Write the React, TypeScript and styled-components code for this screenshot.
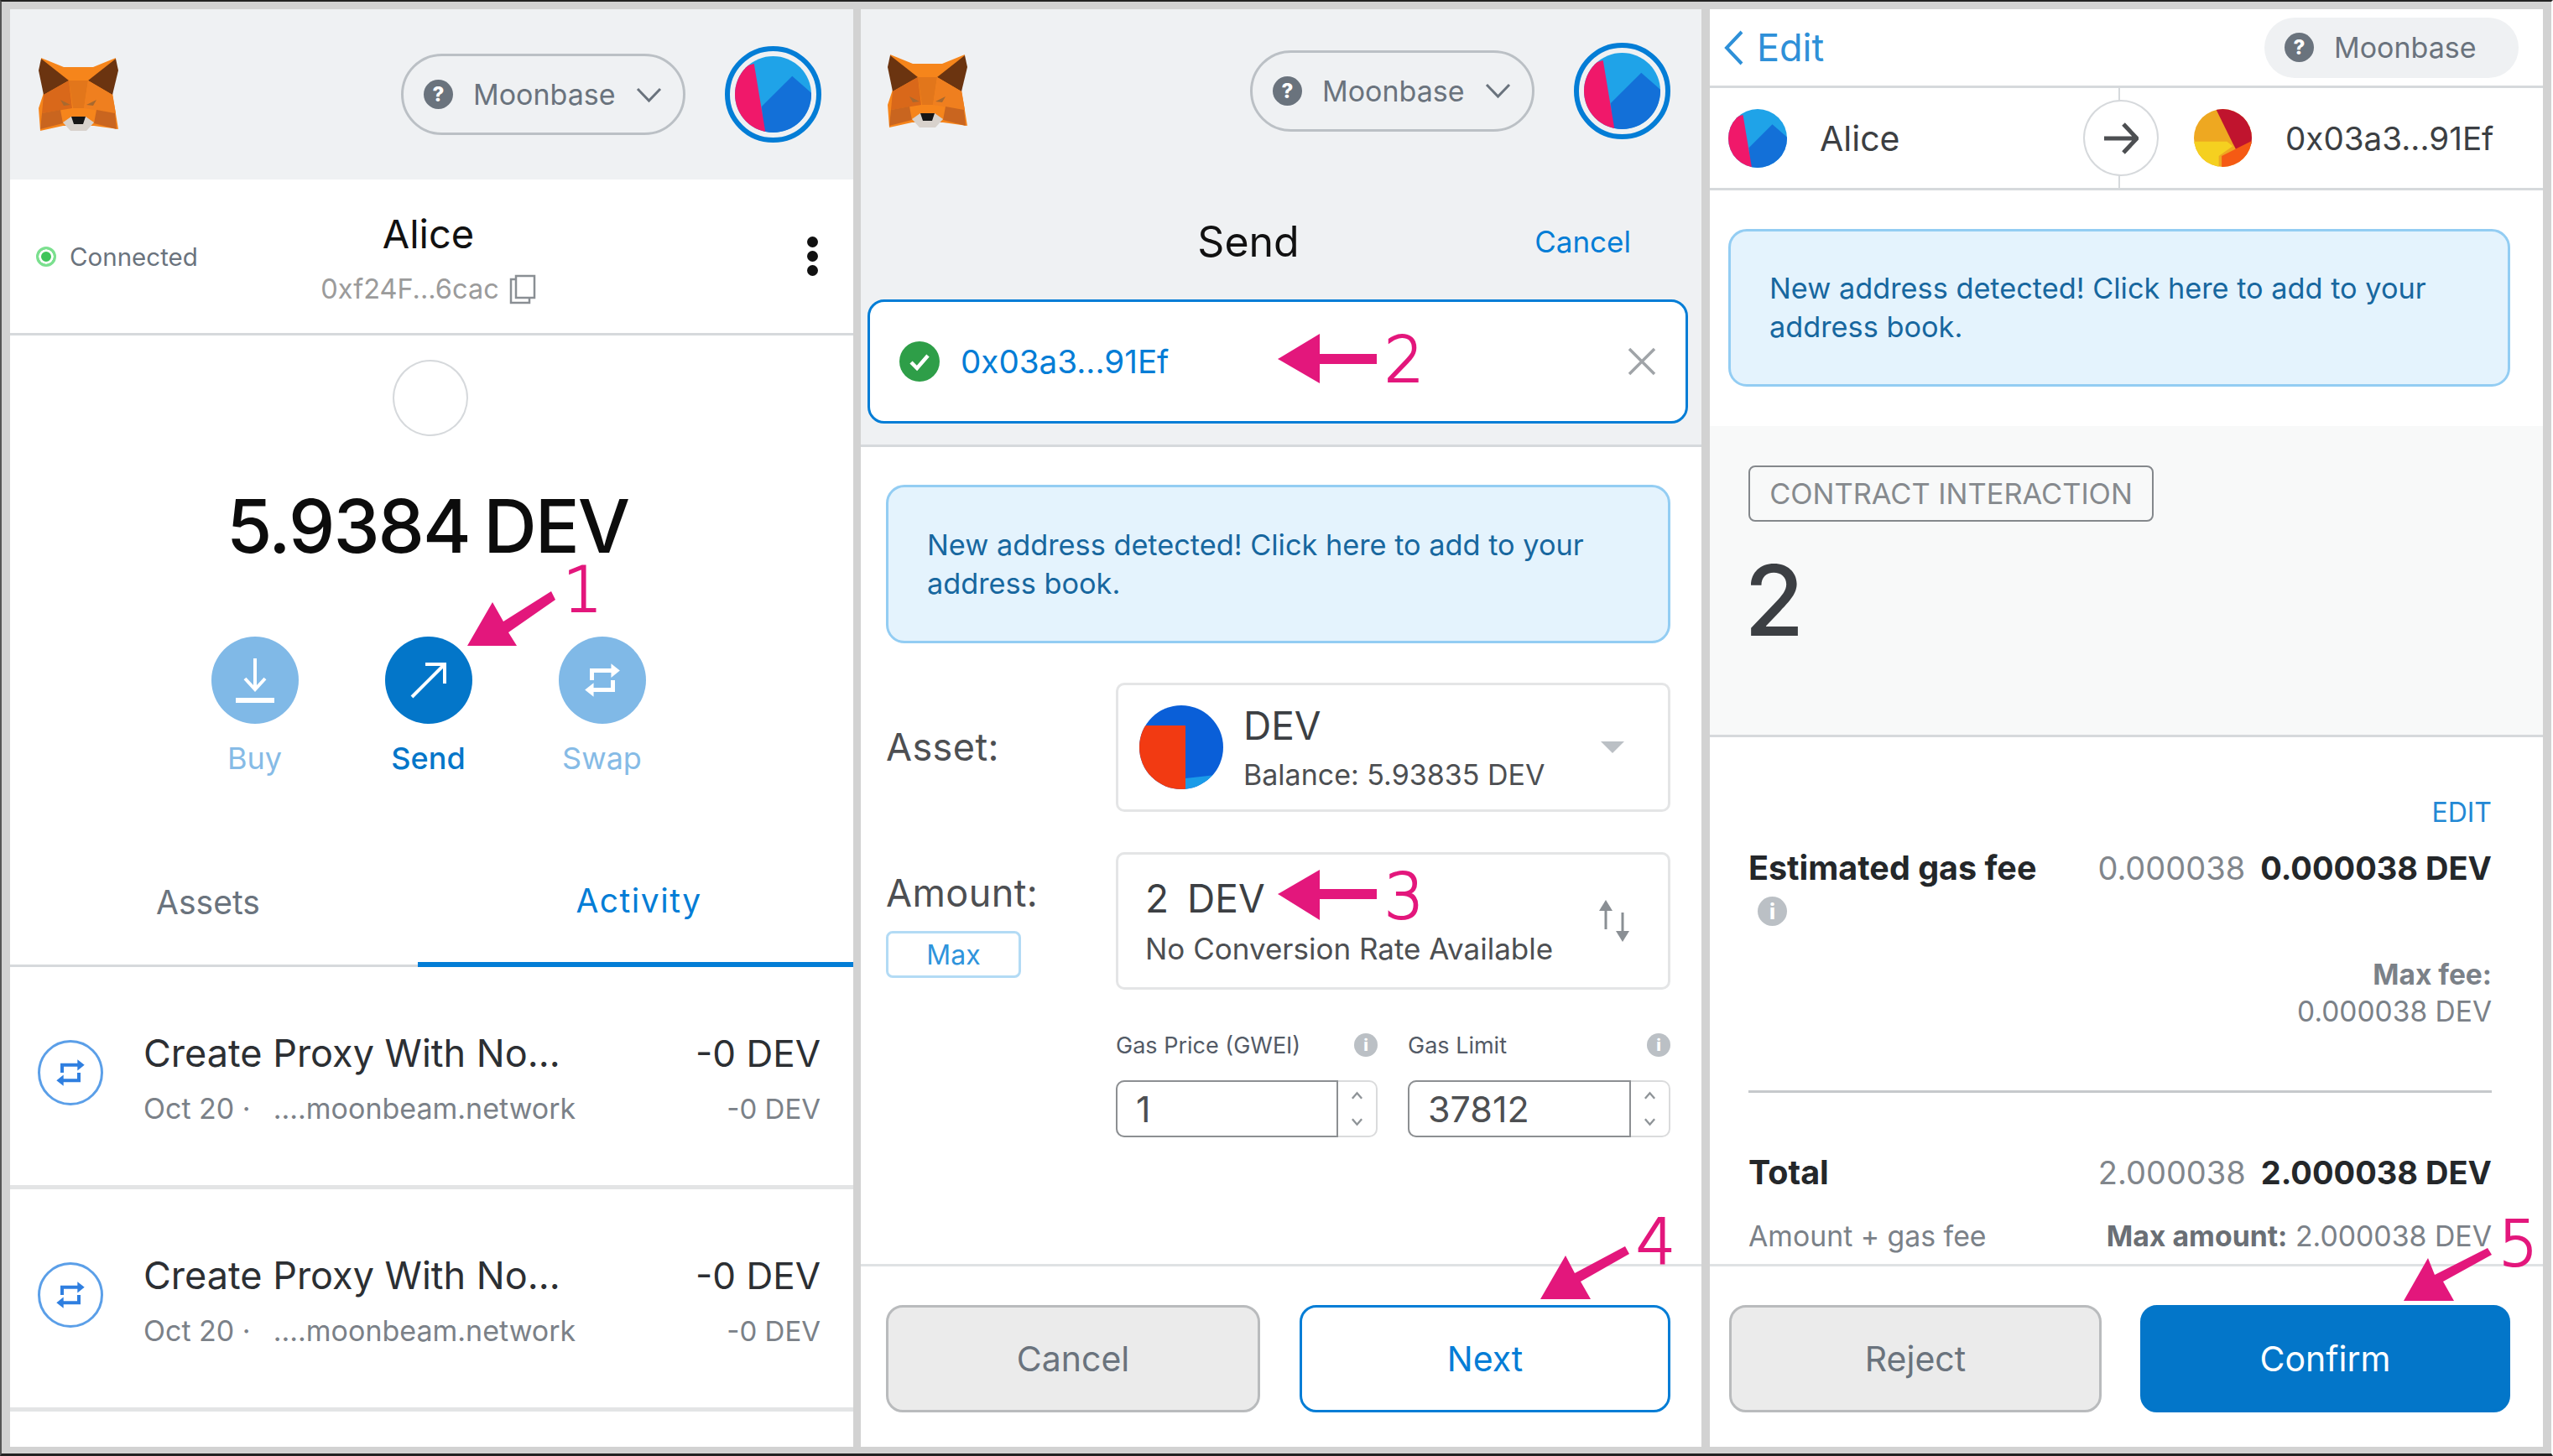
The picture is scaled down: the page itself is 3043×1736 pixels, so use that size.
import React from 'react';
import styled, { createGlobalStyle } from 'styled-components';

const GlobalStyle = createGlobalStyle`
  html, body {
    margin: 0;
    padding: 0;
    background: #d2d2d2;
  }
  * {
    box-sizing: border-box;
  }
`;

const BLUE = '#037dd6';
const LINE = '#d6d9dc';
const GRAY = '#6a737d';
const INK = '#24272a';
const PINK = '#e3177c';

const Page = styled.div`
  position: relative;
  width: 3043px;
  height: 1736px;
  display: flex;
  padding: 9px 0 8px 10px;
  background: #d2d2d2;
  border-top: 2px solid #222;
  border-left: 2px solid #555;
  border-right: 2px solid #fff;
  border-bottom: 3px solid #222;
  font-family: 'Inter', 'Noto Sans', sans-serif;
  color: ${INK};
  overflow: hidden;
`;

const Panel = styled.section<{ $width: number; $gap?: number }>`
  width: ${(p) => p.$width}px;
  margin-right: ${(p) => p.$gap ?? 0}px;
  height: 1714px;
  flex: none;
  display: flex;
  flex-direction: column;
  background: #fff;
  overflow: hidden;
`;

const AppBar = styled.header<{ $height: number; $left: number; $right: number }>`
  height: ${(p) => p.$height}px;
  flex: none;
  display: flex;
  align-items: center;
  justify-content: space-between;
  padding: 0 ${(p) => p.$right}px 0 ${(p) => p.$left}px;
  background: #eff1f3;
`;

const AppBarRight = styled.div`
  display: flex;
  align-items: center;
  gap: 47px;
`;

const NetworkPill = styled.div<{ $plain?: boolean }>`
  display: flex;
  align-items: center;
  width: ${(p) => (p.$plain ? 303 : 339)}px;
  height: ${(p) => (p.$plain ? 72 : 97)}px;
  padding-left: 24px;
  border: ${(p) => (p.$plain ? 'none' : '3px solid #bbc0c5')};
  border-radius: 50px;
  background: ${(p) => (p.$plain ? '#eff1f3' : 'transparent')};
  color: ${GRAY};
  font-size: 34px;
`;

const HelpDot = styled.span`
  width: 35px;
  height: 35px;
  flex: none;
  margin-right: 24px;
  display: flex;
  align-items: center;
  justify-content: center;
  border-radius: 50%;
  background: ${GRAY};
  color: #fff;
  font-size: 24px;
  font-weight: 800;
`;

const PillChevron = styled.svg`
  width: 33px;
  height: 20px;
  margin-left: 23px;
  fill: none;
  stroke: ${GRAY};
  stroke-width: 3;
`;

const AccountAvatar = styled.div`
  width: 115px;
  height: 115px;
  padding: 6px;
  border: 6px solid ${BLUE};
  border-radius: 50%;
`;

const Jazz = styled.svg<{ $size?: number }>`
  display: block;
  width: ${(p) => (p.$size ? `${p.$size}px` : '100%')};
  height: ${(p) => (p.$size ? `${p.$size}px` : '100%')};
  flex: none;
  border-radius: 50%;
`;

const AccountRow = styled.div`
  height: 186px;
  flex: none;
  display: grid;
  grid-template-columns: 1fr auto 1fr;
  align-items: center;
  padding: 0 39px 0 31px;
  border-bottom: 3px solid ${LINE};
`;

const Connected = styled.div`
  display: flex;
  align-items: center;
  gap: 16px;
  font-size: 29.5px;
  color: ${GRAY};
`;

const GreenDot = styled.span`
  width: 24px;
  height: 24px;
  border-radius: 50%;
  border: 3px solid #7be08f;
  background: #3fc45a;
  box-shadow: inset 0 0 0 3px #fff;
`;

const AccountName = styled.div`
  align-self: start;
  margin-top: 37px;
  display: flex;
  flex-direction: column;
  align-items: center;
  gap: 16px;
`;

const NameText = styled.div`
  font-size: 47px;
  line-height: 56px;
  color: #111;
`;

const AddressLine = styled.div`
  display: flex;
  align-items: center;
  gap: 12px;
  font-size: 32.5px;
  line-height: 44px;
  color: #9b9b9b;
`;

const CopyIcon = styled.svg`
  width: 32px;
  height: 36px;
  fill: none;
  stroke: #8a8f94;
  stroke-width: 2.5;
`;

const Kebab = styled.div`
  justify-self: end;
  width: 16px;
  display: flex;
  flex-direction: column;
  gap: 4px;
  span {
    width: 13px;
    height: 13px;
    border-radius: 50%;
    background: #111;
  }
`;

const Balance = styled.div`
  padding: 29px 4px 0 0;
  display: flex;
  flex-direction: column;
  align-items: center;
`;

const TokenCircle = styled.div`
  width: 90px;
  height: 91px;
  border: 2px solid ${LINE};
  border-radius: 50%;
`;

const BalanceText = styled.div`
  margin: 57px 6px 0 0;
  font-size: 88px;
  font-weight: 500;
  line-height: 100px;
  letter-spacing: -2px;
  word-spacing: -5px;
  color: #0c0c0c;
`;

const Actions = styled.div`
  margin: 82px 4px 0 0;
  display: flex;
`;

const Action = styled.div<{ $active?: boolean }>`
  width: 207px;
  display: flex;
  flex-direction: column;
  align-items: center;
  gap: 18px;
  color: ${(p) => (p.$active ? '#0376c9' : '#86bbe6')};
  font-size: 36px;
  line-height: 46px;
  font-weight: ${(p) => (p.$active ? 500 : 400)};
`;

const ActionDisc = styled.div<{ $active?: boolean }>`
  width: 104px;
  height: 104px;
  display: flex;
  align-items: center;
  justify-content: center;
  border-radius: 50%;
  background: ${(p) => (p.$active ? '#0376c9' : '#80b9e7')};
`;

const Tabs = styled.div`
  margin-top: 73px;
  height: 153px;
  flex: none;
  display: grid;
  grid-template-columns: 486px 1fr;
  border-bottom: 3px solid ${LINE};
`;

const Tab = styled.div<{ $active?: boolean }>`
  display: flex;
  align-items: center;
  justify-content: center;
  margin-bottom: ${(p) => (p.$active ? -3 : 0)}px;
  padding: ${(p) => (p.$active ? '0 0 0 8px' : '0 14px 0 0')};
  border-bottom: ${(p) => (p.$active ? `6px solid ${BLUE}` : 'none')};
  font-size: 39px;
  letter-spacing: ${(p) => (p.$active ? 1.5 : 0)}px;
  color: ${(p) => (p.$active ? BLUE : GRAY)};
`;

const TxRow = styled.div`
  height: 265px;
  flex: none;
  display: grid;
  grid-template-columns: 78px 1fr auto;
  column-gap: 48px;
  padding: 75px 39px 0 33px;
  border-bottom: 5px solid #e3e4e5;
`;

const TxDisc = styled.div`
  width: 78px;
  height: 78px;
  margin-top: 12px;
  display: flex;
  align-items: center;
  justify-content: center;
  border: 3px solid #5b9fe8;
  border-radius: 50%;
`;

const TxTitle = styled.div`
  font-size: 45px;
  line-height: 56px;
  color: #2c2f33;
`;

const TxAmount = styled(TxTitle)`
  font-size: 44px;
`;

const TxSub = styled.div`
  margin-top: 16px;
  display: flex;
  gap: 27px;
  font-size: 34px;
  line-height: 44px;
  color: #7b8188;
`;

const TxAmounts = styled.div`
  text-align: right;
`;

const TxAmountSub = styled.div`
  margin-top: 16px;
  font-size: 33px;
  line-height: 44px;
  color: #7b8188;
`;

const SendHead = styled.div`
  flex: none;
  background: #eff1f3;
  padding-bottom: 25px;
  border-bottom: 3px solid ${LINE};
`;

const TitleRow = styled.div`
  height: 152px;
  display: grid;
  grid-template-columns: 1fr auto 1fr;
  align-items: center;
  padding: 14px 84px 0 0;
`;

const TitleText = styled.div`
  grid-column: 2;
  padding-left: 6px;
  font-size: 50px;
  color: #111;
`;

const LinkText = styled.div`
  justify-self: end;
  font-size: 35px;
  color: ${BLUE};
`;

const AddressBox = styled.div`
  height: 148px;
  margin: 0 16px 0 8px;
  display: flex;
  align-items: center;
  padding: 0 34px 0 35px;
  border: 3px solid ${BLUE};
  border-radius: 20px;
  background: #fff;
`;

const AddressText = styled.div`
  margin-left: 25px;
  flex: 1;
  font-size: 38.6px;
  color: ${BLUE};
`;

const CloseIcon = styled.svg`
  width: 36px;
  height: 36px;
  stroke: #a0a4a8;
  stroke-width: 3.5;
`;

const Notice = styled.div<{ $left: number; $right: number; $top: number; $height: number }>`
  height: ${(p) => p.$height}px;
  flex: none;
  margin: ${(p) => p.$top}px ${(p) => p.$right}px 0 ${(p) => p.$left}px;
  padding: 0 40px 0 46px;
  display: flex;
  align-items: center;
  border: 3px solid #93cdf3;
  border-radius: 22px;
  background: #e4f3fd;
  color: #17679f;
  font-size: 34.3px;
  line-height: 46px;
`;

const SendBody = styled.div`
  flex: 1;
  display: flex;
  flex-direction: column;
`;

const Field = styled.div<{ $top: number }>`
  margin: ${(p) => p.$top}px 37px 0 30px;
  display: grid;
  grid-template-columns: 274px 661px;
`;

const FieldLabel = styled.div<{ $top?: number; $centered?: boolean }>`
  align-self: ${(p) => (p.$centered ? 'center' : 'start')};
  margin-top: ${(p) => p.$top ?? 0}px;
  font-size: 45px;
  letter-spacing: 0.4px;
  line-height: 50px;
  color: #4d4f52;
`;

const MaxButton = styled.div`
  width: 161px;
  height: 56px;
  margin-top: 20px;
  display: flex;
  align-items: center;
  justify-content: center;
  border: 3px solid #b3dbf5;
  border-radius: 8px;
  color: #2f94dc;
  font-size: 32px;
`;

const FieldBox = styled.div<{ $height: number }>`
  height: ${(p) => p.$height}px;
  display: flex;
  align-items: center;
  position: relative;
  border: 3px solid #e4e5e6;
  border-radius: 10px;
`;

const AssetBox = styled(FieldBox)`
  padding-left: 25px;
`;

const AssetText = styled.div`
  margin-left: 24px;
  flex: 1;
`;

const AssetName = styled.div`
  font-size: 46px;
  line-height: 52px;
  color: #3c3f43;
`;

const AssetBalance = styled.div`
  margin-top: 13px;
  font-size: 34px;
  line-height: 40px;
  color: #4d4f52;
`;

const CaretDown = styled.span`
  width: 0;
  height: 0;
  margin-right: 52px;
  border-left: 14px solid transparent;
  border-right: 14px solid transparent;
  border-top: 14px solid #bbc0c5;
`;

const AmountBox = styled(FieldBox)`
  padding: 0 42px 0 32px;
  justify-content: space-between;
`;

const AmountValue = styled.div`
  display: flex;
  gap: 22px;
  font-size: 46px;
  line-height: 56px;
  color: #3c3f43;
`;

const AmountNote = styled.div`
  margin-top: 10px;
  font-size: 35px;
  line-height: 44px;
  color: #4d4f52;
`;

const GasGrid = styled.div`
  margin: 48px 37px 0 304px;
  display: grid;
  grid-template-columns: 312px 313px;
  column-gap: 36px;
  row-gap: 24px;
`;

const GasLabel = styled.div`
  height: 36px;
  display: flex;
  align-items: center;
  justify-content: space-between;
  font-size: 27px;
  color: #535a66;
`;

const InfoDot = styled.span<{ $size?: number }>`
  width: ${(p) => p.$size ?? 28}px;
  height: ${(p) => p.$size ?? 28}px;
  flex: none;
  display: flex;
  align-items: center;
  justify-content: center;
  border-radius: 50%;
  background: #bbc0c5;
  color: #fff;
  font-size: ${(p) => (p.$size ? p.$size - 10 : 20)}px;
  font-weight: 800;
`;

const Stepper = styled.div`
  height: 68px;
  display: grid;
  grid-template-columns: 1fr 45px;
  border: 2px solid #dadbdc;
  border-radius: 10px;
`;

const StepperValue = styled.div`
  margin: -2px 0 -2px -2px;
  padding-left: 22px;
  display: flex;
  align-items: center;
  border: 2px solid #8c8f92;
  border-radius: 10px 0 0 10px;
  font-size: 43px;
  color: #4d4f52;
`;

const StepperArrows = styled.svg`
  width: 100%;
  height: 100%;
  fill: none;
  stroke: #8f9498;
  stroke-width: 2.5;
`;

const FooterBar = styled.div<{ $columns: string; $left: number; $right: number; $gap: number }>`
  height: 218px;
  flex: none;
  display: grid;
  grid-template-columns: ${(p) => p.$columns};
  column-gap: ${(p) => p.$gap}px;
  padding: 46px ${(p) => p.$right}px 0 ${(p) => p.$left}px;
  border-top: 3px solid #dfe2e4;
`;

const ActionButton = styled.div<{ $variant: 'muted' | 'outline' | 'solid' }>`
  height: 128px;
  display: flex;
  align-items: center;
  justify-content: center;
  border-radius: 20px;
  font-size: 41px;
  border: 3px solid
    ${(p) => (p.$variant === 'muted' ? '#b9bbbd' : BLUE)};
  background: ${(p) =>
    p.$variant === 'muted' ? '#ebebeb' : p.$variant === 'solid' ? '#0376c9' : '#fff'};
  color: ${(p) =>
    p.$variant === 'muted' ? GRAY : p.$variant === 'solid' ? '#fff' : BLUE};
  ${(p) => p.$variant === 'solid' && 'border-color: #0376c9;'}
`;

const EditBar = styled.div`
  height: 94px;
  flex: none;
  display: flex;
  align-items: center;
  justify-content: space-between;
  padding: 0 29px 0 17px;
  border-bottom: 3px solid ${LINE};
`;

const BackLink = styled.div`
  display: flex;
  align-items: center;
  gap: 15px;
  font-size: 45px;
  color: #2e90d8;
`;

const BackChevron = styled.svg`
  width: 24px;
  height: 42px;
  fill: none;
  stroke: #2e90d8;
  stroke-width: 4;
`;

const Parties = styled.div`
  height: 122px;
  flex: none;
  position: relative;
  display: grid;
  grid-template-columns: 490px 1fr;
  border-bottom: 3px solid ${LINE};
  &::before {
    content: '';
    position: absolute;
    left: 487px;
    top: 0;
    bottom: 0;
    width: 2px;
    background: ${LINE};
  }
`;

const Party = styled.div<{ $left: number; $gap: number; $size: number }>`
  display: flex;
  align-items: center;
  gap: ${(p) => p.$gap}px;
  padding-left: ${(p) => p.$left}px;
  font-size: ${(p) => p.$size}px;
  color: #3c3f43;
`;

const ArrowDisc = styled.div`
  position: absolute;
  left: 445px;
  top: 14px;
  width: 90px;
  height: 91px;
  display: flex;
  align-items: center;
  justify-content: center;
  border: 2px solid ${LINE};
  border-radius: 50%;
  background: #fff;
`;

const ContractBlock = styled.div`
  height: 371px;
  flex: none;
  margin-top: 47px;
  padding: 47px 0 0 46px;
  background: #f8f9f9;
  border-bottom: 3px solid ${LINE};
`;

const MethodBadge = styled.div`
  width: 483px;
  height: 67px;
  display: flex;
  align-items: center;
  justify-content: center;
  border: 2px solid #84888c;
  border-radius: 8px;
  color: #868a8e;
  font-size: 34.4px;
`;

const ContractValue = styled.div`
  margin: 34px 0 0 -5px;
  font-size: 116px;
  font-weight: 500;
  line-height: 120px;
  color: #3c3f43;
`;

const Details = styled.div`
  flex: 1;
  padding: 68px 61px 0 46px;
  overflow: hidden;
`;

const EditLink = styled.div`
  font-size: 32px;
  line-height: 44px;
  text-align: right;
  color: #2388d4;
`;

const DetailLine = styled.div<{ $top: number }>`
  margin-top: ${(p) => p.$top}px;
  display: flex;
  align-items: center;
  justify-content: space-between;
  font-size: 38px;
  line-height: 44px;
`;

const Strong = styled.span`
  font-weight: 700;
  color: #24272a;
`;

const RowHeading = styled(Strong)`
  font-size: 39.5px;
`;

const Faint = styled.span`
  color: #81868c;
`;

const FigureGroup = styled.div`
  display: flex;
  gap: 18px;
`;

const RightNote = styled.div<{ $top?: number; $bold?: boolean }>`
  margin-top: ${(p) => p.$top ?? 0}px;
  text-align: right;
  font-size: 33.5px;
  line-height: 44px;
  font-weight: ${(p) => (p.$bold ? 700 : 400)};
  color: #7b8188;
`;

const Rule = styled.div`
  height: 3px;
  margin-top: 72px;
  background: #c6c9cc;
`;

const SmallLine = styled(DetailLine)`
  font-size: 33.8px;
  color: #7b8188;
`;

const MaxAmount = styled.span`
  font-weight: 700;
  color: #6a6f75;
`;

const GasInfo = styled.div`
  margin: 12px 0 0 11px;
`;

const AnnotationLayer = styled.svg`
  position: absolute;
  left: -2px;
  top: -2px;
  width: 3043px;
  height: 1736px;
  fill: ${PINK};
  pointer-events: none;
`;

const Digit = styled.span<{ $x: number; $y: number }>`
  position: absolute;
  left: ${(p) => p.$x - 2}px;
  top: ${(p) => p.$y - 2}px;
  font-family: 'DejaVu Sans', sans-serif;
  font-weight: 200;
  font-size: 74px;
  line-height: 74px;
  color: ${PINK};
  -webkit-text-stroke: 2px ${PINK};
`;

function Fox(): JSX.Element {
  return (
    <svg width='95' height='87' viewBox='0 0 95 87'>
      <polygon fill='#f6851b' points='3,0 30,11 65,11 92,0 88,42 95,85 66,81 29,81 2,87 0,60 6,42' />
      <polygon fill='#6b3410' points='3,1 36,27 6,44 0,15' />
      <polygon fill='#6b3410' points='92,1 59,27 88,44 95,15' />
      <polygon fill='#e2761b' points='36,27 59,27 54,60 41,60' />
      <polygon fill='#d9681a' points='6,44 36,27 40,60 4,66' />
      <polygon fill='#ef7f1f' points='59,27 88,44 92,66 54,60' />
      <polygon fill='#c9651f' points='4,66 26,62 29,78 2,85' />
      <polygon fill='#c9651f' points='91,66 69,62 66,78 93,85' />
      <polygon fill='#a8692f' points='26,50 38,56 30,57' />
      <polygon fill='#a8692f' points='69,50 57,56 65,57' />
      <polygon fill='#d8d2cc' points='29,77 39,70 56,70 66,77 57,87 38,87' />
      <polygon fill='#161616' points='39,70 56,70 53,79 42,79' />
    </svg>
  );
}

function AliceJazz({ size }: { size?: number }): JSX.Element {
  return (
    <Jazz $size={size} viewBox='0 0 100 100'>
      <rect width='100' height='100' fill='#1fa3e8' />
      <polygon fill='#1370d8' points='35,66 75,26 100,48 100,100 38,100' />
      <polygon fill='#f0186a' points='-5,18 25,10 40,100 -5,100' />
    </Jazz>
  );
}

function RecipientJazz(): JSX.Element {
  return (
    <Jazz $size={69} viewBox='0 0 100 100'>
      <rect width='100' height='100' fill='#eea821' />
      <polygon fill='#c0142e' points='38,0 100,0 100,62 76,76 67,59' />
      <polygon fill='#f55a14' points='48,100 48,81 76,67 100,55 100,100' />
      <polygon fill='#f5d020' points='0,56 57,56 67,64 43,81 43,100 0,100' />
    </Jazz>
  );
}

function SwapGlyph({ size, color }: { size: number; color: string }): JSX.Element {
  return (
    <svg width={size} height={size} viewBox='0 0 24 24' fill={color} stroke={color}>
      <path d='M6 12V6.5H18M18 12v5.5H6' fill='none' strokeWidth='2.4' />
      <polygon points='17,2.5 22,6.5 17,10.5' stroke='none' />
      <polygon points='7,13.5 2,17.5 7,21.5' stroke='none' />
    </svg>
  );
}

function Transaction(): JSX.Element {
  return (
    <TxRow>
      <TxDisc>
        <SwapGlyph size={40} color='#2f7fe0' />
      </TxDisc>
      <div>
        <TxTitle>Create Proxy With No...</TxTitle>
        <TxSub>
          <span>Oct 20 ·</span>
          <span>....moonbeam.network</span>
        </TxSub>
      </div>
      <TxAmounts>
        <TxAmount>-0 DEV</TxAmount>
        <TxAmountSub>-0 DEV</TxAmountSub>
      </TxAmounts>
    </TxRow>
  );
}

function Network({ plain }: { plain?: boolean }): JSX.Element {
  return (
    <NetworkPill $plain={plain}>
      <HelpDot>?</HelpDot>
      Moonbase
      {!plain && (
        <PillChevron viewBox='0 0 31 20'>
          <path d='M2 3l13.5 14L29 3' />
        </PillChevron>
      )}
    </NetworkPill>
  );
}

function WalletBar(props: { height: number; left: number; right: number }): JSX.Element {
  return (
    <AppBar $height={props.height} $left={props.left} $right={props.right}>
      <Fox />
      <AppBarRight>
        <Network />
        <AccountAvatar>
          <AliceJazz />
        </AccountAvatar>
      </AppBarRight>
    </AppBar>
  );
}

function Spinner(): JSX.Element {
  return (
    <StepperArrows viewBox='0 0 48 68'>
      <path d='M18 21l6-7 6 7M18 47l6 7 6-7' />
    </StepperArrows>
  );
}

function Annotations(): JSX.Element {
  return (
    <>
      <AnnotationLayer viewBox='0 0 3043 1736'>
        <polygon points='657,705 662,715 606,754 616,770 557,770 587,718 600,741' />
        <polygon points='1523,428 1573,398 1573,422 1641,422 1641,434 1573,434 1573,457' />
        <polygon points='1523,1066 1573,1037 1573,1060 1641,1060 1641,1072 1573,1072 1573,1097' />
        <polygon points='1937,1486 1942,1495 1884,1528 1896,1549 1836,1549 1866,1497 1877,1518' />
        <polygon points='2965,1488 2970,1496 2912,1528 2925,1551 2865,1551 2894,1500 2902,1520' />
      </AnnotationLayer>
      <Digit $x={671} $y={666}>1</Digit>
      <Digit $x={1650} $y={392}>2</Digit>
      <Digit $x={1650} $y={1032}>3</Digit>
      <Digit $x={1950} $y={1444}>4</Digit>
      <Digit $x={2978} $y={1446}>5</Digit>
    </>
  );
}

function App(): JSX.Element {
  return (
    <Page>
      <GlobalStyle />
      <Panel $width={1005} $gap={9}>
        <WalletBar height={203} left={34} right={38} />
        <AccountRow>
          <Connected>
            <GreenDot />
            Connected
          </Connected>
          <AccountName>
            <NameText>Alice</NameText>
            <AddressLine>
              0xf24F...6cac
              <CopyIcon viewBox='0 0 32 36'>
                <path d='M8 6H2v28h22v-6M8 2h22v26H8z' />
              </CopyIcon>
            </AddressLine>
          </AccountName>
          <Kebab>
            <span />
            <span />
            <span />
          </Kebab>
        </AccountRow>
        <Balance>
          <TokenCircle />
          <BalanceText>5.9384 DEV</BalanceText>
          <Actions>
            <Action>
              <ActionDisc>
                <svg width='46' height='56' viewBox='0 0 46 56' fill='none' stroke='#fff' strokeWidth='4'>
                  <path d='M23 2v36M11 26l12 13 12-13' />
                  <path d='M0 52h46' strokeWidth='6' />
                </svg>
              </ActionDisc>
              Buy
            </Action>
            <Action $active>
              <ActionDisc $active>
                <svg width='44' height='44' viewBox='0 0 44 44' fill='none' stroke='#fff' strokeWidth='4'>
                  <path d='M2 42L41 3M18 3h23v23' />
                </svg>
              </ActionDisc>
              Send
            </Action>
            <Action>
              <ActionDisc>
                <SwapGlyph size={50} color='#fff' />
              </ActionDisc>
              Swap
            </Action>
          </Actions>
        </Balance>
        <Tabs>
          <Tab>Assets</Tab>
          <Tab $active>Activity</Tab>
        </Tabs>
        <Transaction />
        <Transaction />
      </Panel>

      <Panel $width={1002} $gap={10}>
        <SendHead>
          <WalletBar height={194} left={32} right={37} />
          <TitleRow>
            <TitleText>Send</TitleText>
            <LinkText>Cancel</LinkText>
          </TitleRow>
          <AddressBox>
            <svg width='48' height='48' viewBox='0 0 48 48'>
              <circle cx='24' cy='24' r='24' fill='#2e9e48' />
              <path d='M14 25l7 7 13-15' fill='none' stroke='#fff' strokeWidth='4.5' />
            </svg>
            <AddressText>0x03a3...91Ef</AddressText>
            <CloseIcon viewBox='0 0 36 36'>
              <path d='M3 3l30 30M33 3L3 33' />
            </CloseIcon>
          </AddressBox>
        </SendHead>
        <SendBody>
          <Notice $left={30} $right={37} $top={45} $height={189}>
            New address detected! Click here to add to your address book.
          </Notice>
          <Field $top={47}>
            <FieldLabel $centered>Asset:</FieldLabel>
            <AssetBox $height={154}>
              <Jazz $size={100} viewBox='0 0 100 100'>
                <rect width='100' height='100' fill='#0a5fd8' />
                <polygon fill='#1a9be8' points='55,87 100,82 100,100 55,100' />
                <polygon fill='#f23a12' points='0,24 55,24 55,100 0,100' />
              </Jazz>
              <AssetText>
                <AssetName>DEV</AssetName>
                <AssetBalance>Balance: 5.93835 DEV</AssetBalance>
              </AssetText>
              <CaretDown />
            </AssetBox>
          </Field>
          <Field $top={48}>
            <div>
              <FieldLabel $top={24}>Amount:</FieldLabel>
              <MaxButton>Max</MaxButton>
            </div>
            <AmountBox $height={164}>
              <div>
                <AmountValue>
                  <span>2</span>
                  <span>DEV</span>
                </AmountValue>
                <AmountNote>No Conversion Rate Available</AmountNote>
              </div>
              <svg width='42' height='52' viewBox='0 0 42 52' fill='none' stroke='#8a8f94' strokeWidth='3'>
                <path d='M10 6v30M30 16v30' />
                <path d='M2 14l8-13 8 13z' fill='#8a8f94' stroke='none' />
                <path d='M22 38l8 13 8-13z' fill='#8a8f94' stroke='none' />
              </svg>
            </AmountBox>
          </Field>
          <GasGrid>
            <GasLabel>
              Gas Price (GWEI)
              <InfoDot>i</InfoDot>
            </GasLabel>
            <GasLabel>
              Gas Limit
              <InfoDot>i</InfoDot>
            </GasLabel>
            <Stepper>
              <StepperValue>1</StepperValue>
              <Spinner />
            </Stepper>
            <Stepper>
              <StepperValue>37812</StepperValue>
              <Spinner />
            </Stepper>
          </GasGrid>
        </SendBody>
        <FooterBar $columns='446px 442px' $gap={47} $left={30} $right={37}>
          <ActionButton $variant='muted'>Cancel</ActionButton>
          <ActionButton $variant='outline'>Next</ActionButton>
        </FooterBar>
      </Panel>

      <Panel $width={993}>
        <EditBar>
          <BackLink>
            <BackChevron viewBox='0 0 24 42'>
              <path d='M21 2L3 21l18 19' />
            </BackChevron>
            Edit
          </BackLink>
          <Network plain />
        </EditBar>
        <Parties>
          <Party $left={22} $gap={39} $size={41}>
            <AliceJazz size={70} />
            Alice
          </Party>
          <Party $left={87} $gap={40} $size={38.6}>
            <RecipientJazz />
            0x03a3...91Ef
          </Party>
          <ArrowDisc>
            <svg width='42' height='42' viewBox='0 0 42 42' fill='none' stroke='#4d4f52' strokeWidth='5'>
              <path d='M1 21h38M24 4l16 17-16 17' />
            </svg>
          </ArrowDisc>
        </Parties>
        <Notice $left={22} $right={39} $top={46} $height={188}>
          New address detected! Click here to add to your address book.
        </Notice>
        <ContractBlock>
          <MethodBadge>CONTRACT INTERACTION</MethodBadge>
          <ContractValue>2</ContractValue>
        </ContractBlock>
        <Details>
          <EditLink>EDIT</EditLink>
          <DetailLine $top={22}>
            <RowHeading>Estimated gas fee</RowHeading>
            <FigureGroup>
              <Faint>0.000038</Faint>
              <Strong>0.000038 DEV</Strong>
            </FigureGroup>
          </DetailLine>
          <GasInfo>
            <InfoDot $size={35}>i</InfoDot>
          </GasInfo>
          <RightNote $top={36} $bold>Max fee:</RightNote>
          <RightNote>0.000038 DEV</RightNote>
          <Rule />
          <DetailLine $top={73}>
            <RowHeading>Total</RowHeading>
            <FigureGroup>
              <Faint>2.000038</Faint>
              <Strong>2.000038 DEV</Strong>
            </FigureGroup>
          </DetailLine>
          <SmallLine $top={32}>
            <span>Amount + gas fee</span>
            <span>
              <MaxAmount>Max amount:</MaxAmount> 2.000038 DEV
            </span>
          </SmallLine>
        </Details>
        <FooterBar $columns='444px 441px' $gap={46} $left={23} $right={39}>
          <ActionButton $variant='muted'>Reject</ActionButton>
          <ActionButton $variant='solid'>Confirm</ActionButton>
        </FooterBar>
      </Panel>
      <Annotations />
    </Page>
  );
}

export default App;
